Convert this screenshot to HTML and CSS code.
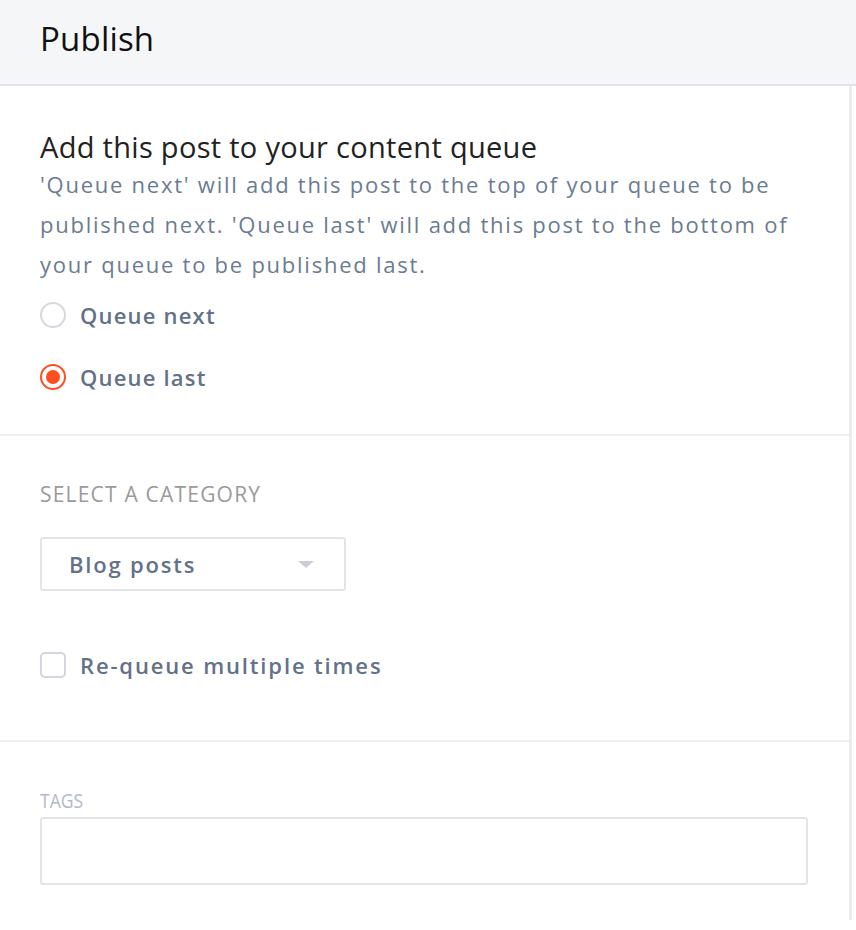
FILE: index.html
```html
<!DOCTYPE html>
<html>
<head>
<meta charset="utf-8">
<link rel="stylesheet" href="styles.css">
</head>
<body>
<div class="panel">
  <header class="header"><h1 class="title">Publish</h1></header>
  <div class="content">
    <section class="section queue">
      <h2 class="heading">Add this post to your content queue</h2>
      <p class="desc">'Queue next' will add this post to the top of your queue to be published next. 'Queue last' will add this post to the bottom of your queue to be published last.</p>
      <label class="option"><span class="radio"></span><span class="opt-label">Queue next</span></label>
      <label class="option"><span class="radio checked"></span><span class="opt-label">Queue last</span></label>
    </section>
    <section class="section category">
      <div class="label">SELECT A CATEGORY</div>
      <div class="select"><span class="select-text">Blog posts</span><span class="caret"></span></div>
      <label class="option check-row"><span class="checkbox"></span><span class="opt-label wide">Re-queue multiple times</span></label>
    </section>
    <section class="section tags">
      <div class="tags-label">TAGS</div>
      <div class="tags-input"></div>
    </section>
  </div>
</div>
</body>
</html>
```
FILE: styles.css
```css
html, body { margin: 0; padding: 0; background: #fff; }
body { font-family: "Open Sans", "Noto Sans", sans-serif; width: 856px; height: 930px; overflow: hidden; }
.header { background: #f5f6f8; border-bottom: 2px solid #e2e3e8; display: flex; align-items: center; padding-left: 40px; padding-bottom: 8px; box-sizing: border-box; height: 86px; }
.title { margin: 0; font-family: "Open Sans", sans-serif; font-weight: 400; font-size: 33px; color: #111; letter-spacing: 0.2px; }
.content { width: 852px; border-right: 3px solid #ececec; height: 834px; box-sizing: border-box; }
.section { padding: 0 40px; border-bottom: 2px solid #efefef; }
.queue { padding-top: 42px; height: 350px; box-sizing: border-box; }
.heading { margin: 0; font-weight: 400; font-size: 29px; color: #222; line-height: 38px; letter-spacing: 0.3px; }
.desc { margin: -2px 0 0; font-size: 22px; line-height: 40px; color: #6b7b92; letter-spacing: 1.75px; }
.option { display: flex; align-items: center; gap: 14px; height: 62px; }
.queue .option:first-of-type { margin-top: 0; }
.radio { width: 22px; height: 22px; border: 2px solid #d5d8e0; border-radius: 50%; box-sizing: content-box; position: relative; }
.radio.checked { border-color: #ff4f22; }
.radio.checked::after { content: ""; position: absolute; left: 4px; top: 4px; width: 14px; height: 14px; border-radius: 50%; background: #ff4f22; }
.opt-label { font-size: 22px; font-weight: 600; color: #637189; letter-spacing: 1.2px; }
.opt-label.wide { letter-spacing: 1.85px; }
.category { height: 306px; box-sizing: border-box; padding-top: 44px; }
.label { font-size: 21px; color: #9a9a9a; letter-spacing: 1.2px; line-height: 28px; }
.select { margin-top: 29px; width: 306px; height: 54px; box-sizing: border-box; border: 2px solid #e4e4e4; border-radius: 3px; display: flex; align-items: center; justify-content: space-between; padding: 0 30px 0 27px; }
.select-text { font-size: 22px; font-weight: 600; color: #637189; letter-spacing: 1.8px; }
.caret { width: 0; height: 0; border-left: 8px solid transparent; border-right: 8px solid transparent; border-top: 7px solid #c9cdd6; }
.check-row { margin-top: 43px; }
.checkbox { width: 22px; height: 22px; border: 2px solid #d2d6e0; border-radius: 5px; box-sizing: content-box; }
.tags { border-bottom: none; padding-top: 48px; }
.tags-label { font-size: 20px; color: #b3b9c6; letter-spacing: 0; line-height: 22px; transform: scaleX(0.88); transform-origin: left; }
.tags-input { margin-top: 5px; width: 768px; height: 68px; box-sizing: border-box; border: 2px solid #e4e4e4; border-radius: 3px; }
```
